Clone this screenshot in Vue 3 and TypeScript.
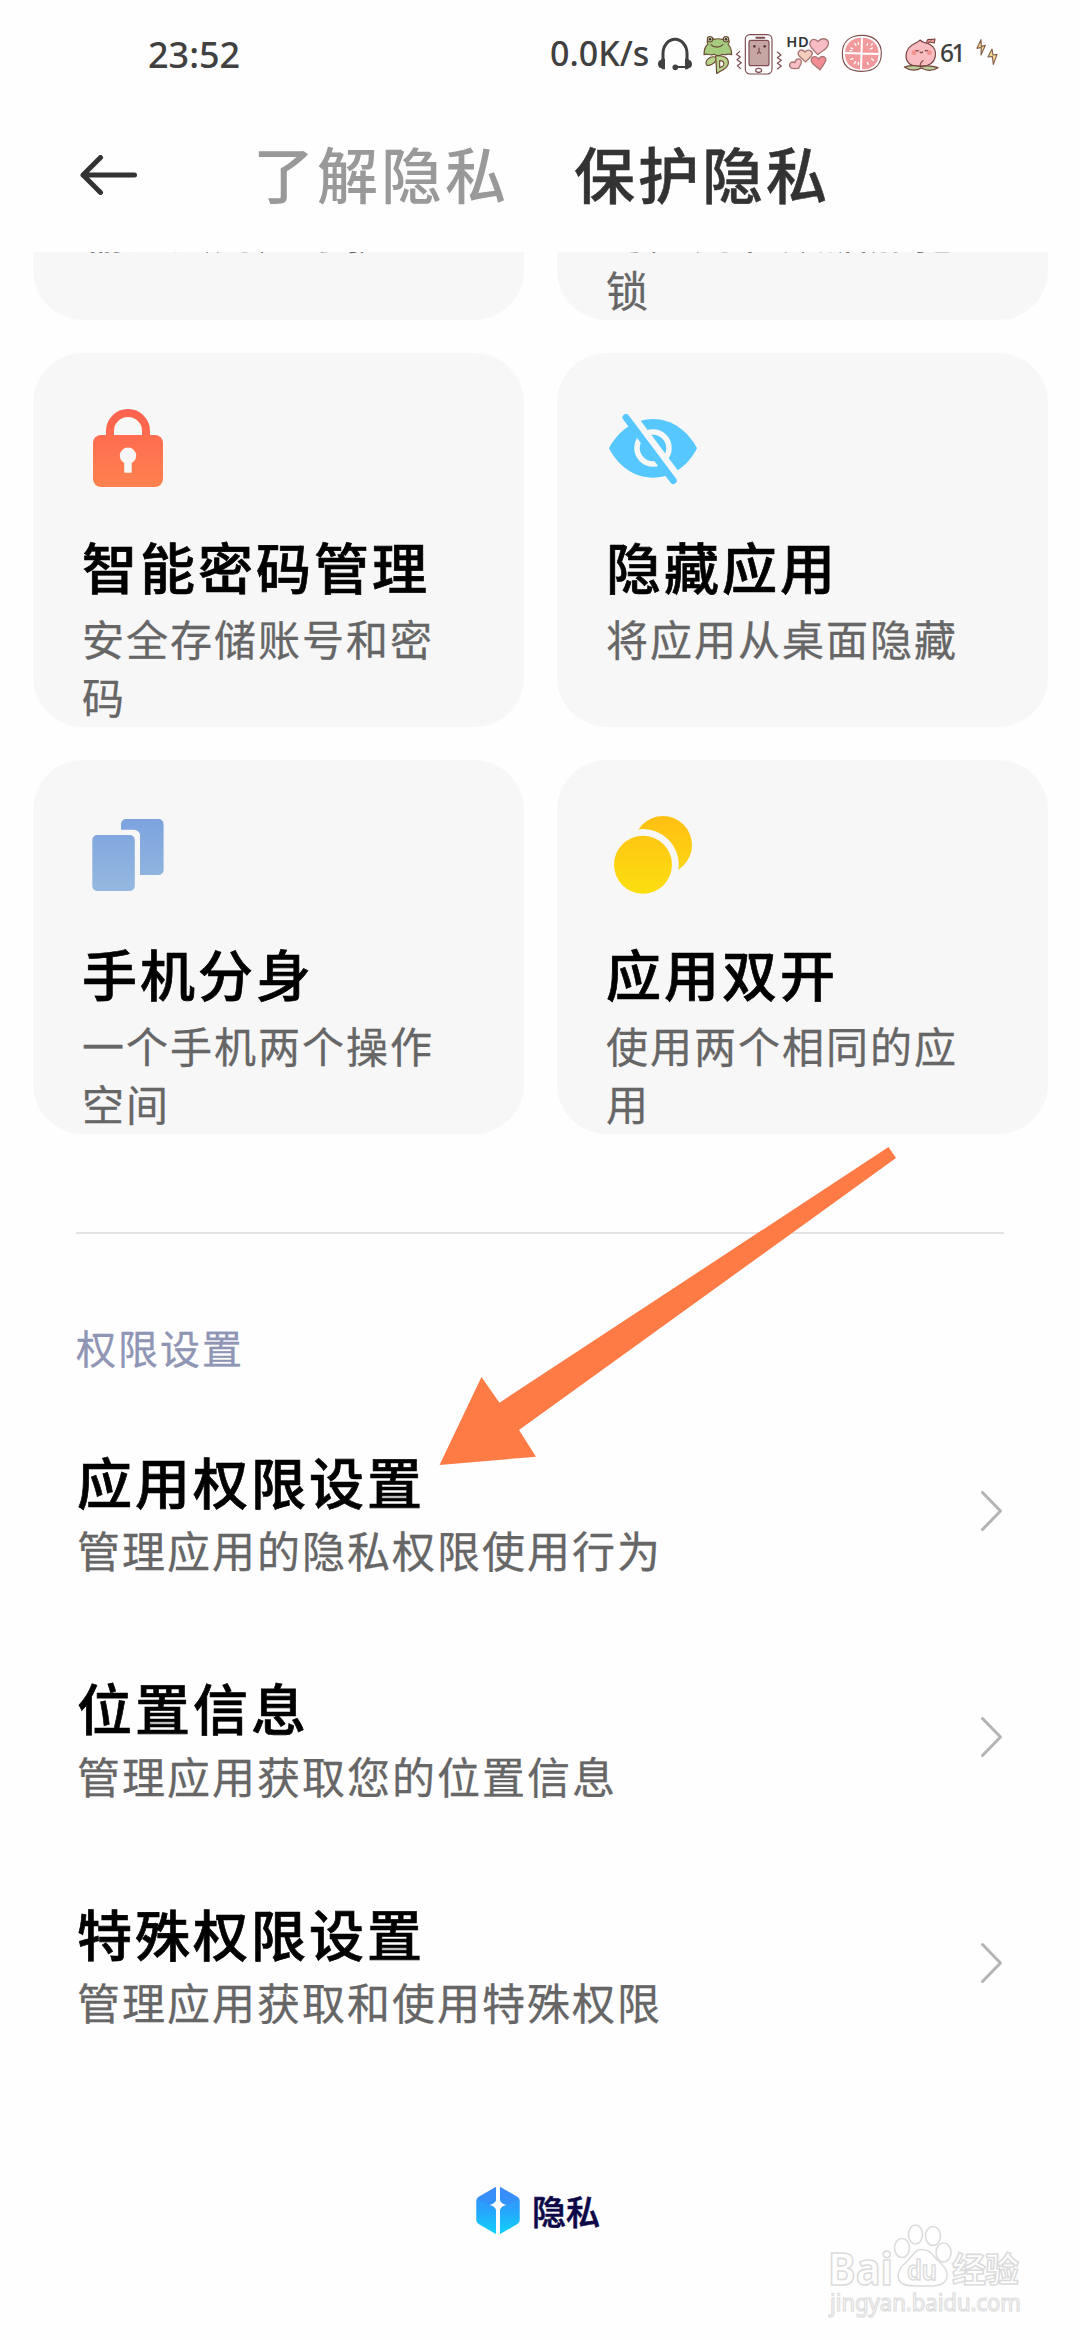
<script setup lang="ts">
interface Card {
  icon?: 'lock' | 'eye' | 'clone' | 'dual'
  title?: string
  desc: string
}

interface Item {
  title: string
  desc: string
}

const cards: Card[] = [
  { desc: '输入法用户守护' },
  { desc: '为应用和数据加把锁' },
  { icon: 'lock', title: '智能密码管理', desc: '安全存储账号和密码' },
  { icon: 'eye', title: '隐藏应用', desc: '将应用从桌面隐藏' },
  { icon: 'clone', title: '手机分身', desc: '一个手机两个操作空间' },
  { icon: 'dual', title: '应用双开', desc: '使用两个相同的应用' },
]

const items: Item[] = [
  { title: '应用权限设置', desc: '管理应用的隐私权限使用行为' },
  { title: '位置信息', desc: '管理应用获取您的位置信息' },
  { title: '特殊权限设置', desc: '管理应用获取和使用特殊权限' },
]
</script>

<template>
  <div class="screen">
    <div class="status">
      <span class="time">23:52</span>
      <span class="speed">0.0K/s</span>
      <svg class="headset" width="36" height="50" viewBox="410 30 108 150">
        <path d="M428 124V100a36 42 0 0 1 72 0v24" fill="none" stroke="#404040" stroke-width="9" />
        <path d="M423 116h11v32h-8l-4-4c-6 0-9-5-9-12s4-12 10-12zM505 116h-11v32h8l4-4c6 0 9-5 9-12s-4-12-10-12z" fill="#404040" />
        <path d="M466 141h36" stroke="#404040" stroke-width="6" />
        <circle cx="465" cy="142" r="8.500" fill="#404040" />
      </svg>
      <svg class="frog" width="31" height="50" viewBox="547 30 93 150">
        <g stroke="#6b4a35" stroke-width="3.500" stroke-linejoin="round" stroke-linecap="round">
          <path d="M590 100L592 160M590 112C570 105 556 122 560 134c8 6 24-2 30-14" fill="#b9d38c" />
          <path d="M588 108c28-4 42 10 37 26-6 14-22 18-34 26z" fill="#b9d38c" />
          <path d="M600 122c12 0 16 8 10 16l-10 5z" fill="#fff" />
          <path d="M553 104c0-18 4-26 12-32a11 11 0 1 1 18-14c9-3 18-2 26 0a11 11 0 1 1 16 15c7 6 11 16 11 31-10-6-18 4-27-1-9 5-18 5-26 0-10 5-20-4-30 1z" fill="#a6cb7e" />
          <circle cx="571" cy="58" r="8" fill="#e8f2d2" />
          <circle cx="619" cy="58" r="8" fill="#e8f2d2" />
          <path d="M574 74c8 10 26 10 36 0" fill="none" />
        </g>
        <circle cx="571" cy="58" r="4" fill="#3b302b" />
        <circle cx="619" cy="58" r="4" fill="#3b302b" />
      </svg>
      <svg class="vibrate" width="48" height="50" viewBox="643 30 144 150">
        <g fill="none" stroke="#7b4b4f" stroke-width="3.500" stroke-linecap="round" stroke-linejoin="round">
          <path d="M657 94l-10 9 12 8-10 8 13 9-12 9 10 9M770 96l11 9-11 8 12 8-12 9 12 8-12 9" />
          <rect x="674" y="44" width="80" height="118" rx="14" fill="#fff" />
          <rect x="685" y="61" width="60" height="76" rx="6" fill="#c5a6a2" />
          <path d="M707 53h24" stroke-width="6" />
          <ellipse cx="714" cy="151" rx="9" ry="6" />
          <path d="M715 84v10M710 101l5-6 5 5" />
        </g>
        <circle cx="701" cy="79" r="4" fill="#61383b" />
        <circle cx="732" cy="79" r="4" fill="#61383b" />
      </svg>
      <svg class="hearts" width="46" height="50" viewBox="40 30 138 150">
        <g stroke="#a87574" stroke-width="4" stroke-linejoin="round">
          <path d="M141 104L123 84c-14-17 5-36 19-19 11-15 34-9 31 8-3 15-20 20-32 31z" fill="#f8bdc4" />
          <path d="M105 126L86 109c-11-13 5-26 17-13 9-11 25-3 21 8-3 10-13 13-19 22z" fill="#f4cdbf" />
          <path d="M84 145c-10 1-20 3-25-3-7-11 4-20 14-14 2-14 19-15 19-2 0 8-6 12-8 19z" fill="#f8bfc4" />
          <path d="M148 150c-5-9-22-12-26-26-3-14 14-19 22-7 8-13 25-7 21 5-3 10-11 17-17 28z" fill="#f18d94" />
        </g>
        <text x="47" y="80" font-size="44" font-weight="600" fill="#353535" textLength="67">HD</text>
      </svg>
      <svg class="citrus" width="42" height="50" viewBox="210 30 126 150">
        <path d="M273 46c36 0 58 21 58 54 0 34-20 54-58 54-36 0-59-16-59-53s23-55 59-55z" fill="#fff" stroke="#80504f" stroke-width="3.500" />
        <path d="M272 53c30 0 51 18 51 48s-18 47-50 47c-31 0-51-16-51-47 0-30 20-48 50-48z" fill="#f2999b" />
        <path d="M273 51l-3 98M220 99l106 3" stroke="#fff" stroke-width="6" />
        <path d="M240 84l5 2M251 71l4 5M290 71l-2 5M304 84l-6 3M239 118l7-2M250 131l4-6M289 127l3 6M302 116l5 5M262 68v5M304 72l-3 3M237 92h5M262 127v7" stroke="#fff" stroke-width="4" stroke-linecap="round" />
      </svg>
      <svg class="peach" width="37" height="50" viewBox="395 30 111 150">
        <g stroke="#75413e" stroke-width="3.500" stroke-linejoin="round">
          <path d="M466 70c0-10 3-14 12-11l13-2-2 12-15-3-3 6" fill="#e99898" />
          <path d="M450 138c-28 5-46-9-46-30 0-23 18-34 29-39 6-3 11-6 13-9 7 8 19 8 31 14 12 7 17 20 15 34-3 20-18 30-42 30z" fill="#f9bcc0" />
          <path d="M399 141c20-6 36-5 50-1 17-4 31-4 51 3-16 10-34 10-50 1-16 9-35 8-51-3z" fill="#b7cf96" />
          <path d="M447 140c-2-8 2-13 8-18M434 91q3 4 7 0M462 91q3 4 7 0M446 96q3 5 8 0" fill="none" stroke-linecap="round" />
        </g>
        <circle cx="428" cy="98" r="7" fill="#f3918d" />
        <circle cx="474" cy="98" r="7" fill="#f3918d" />
      </svg>
      <span class="battery">61</span>
      <svg class="bolts" width="24" height="50" viewBox="610 30 72 150">
        <g fill="#f8dc91" stroke="#86614f" stroke-width="3.500" stroke-linejoin="round">
          <path d="M628 59l-12 26 13-3-1 23 13-29-12 3z" />
          <path d="M661 87l-12 24 13-2 3 24 11-30-12 2z" />
        </g>
      </svg>
    </div>

    <header class="header">
      <svg class="back" width="58" height="40" viewBox="0 0 58 40">
        <path d="M54.500 20H3M20.500 2.500L3 20l17.500 17.500" fill="none" stroke="#333" stroke-width="5" stroke-linecap="round" stroke-linejoin="round" />
      </svg>
      <span class="tab">了解隐私</span>
      <span class="tab active">保护隐私</span>
    </header>

    <main class="content">
      <section class="grid">
        <article v-for="(card, i) in cards" :key="i" class="card">
          <svg class="icon" width="90" height="90" viewBox="0 0 90 90">
            <defs>
              <linearGradient id="lockFill" gradientUnits="userSpaceOnUse" x1="0" y1="6" x2="0" y2="84">
                <stop offset="0" stop-color="#ff614f" /><stop offset="1" stop-color="#ff824f" />
              </linearGradient>
              <linearGradient id="cloneFill" gradientUnits="userSpaceOnUse" x1="0" y1="9" x2="0" y2="81">
                <stop offset="0" stop-color="#7ca3df" /><stop offset="1" stop-color="#95b9e0" />
              </linearGradient>
              <linearGradient id="dualFill" gradientUnits="userSpaceOnUse" x1="0" y1="6" x2="0" y2="84">
                <stop offset="0" stop-color="#ffbf14" /><stop offset="1" stop-color="#fbdf10" />
              </linearGradient>
            </defs>
            <g v-if="card.icon === 'lock'">
              <path d="M27 34V28a18 18 0 0 1 36 0v6" fill="none" stroke="url(#lockFill)" stroke-width="8" />
              <rect x="10" y="32" width="70" height="52" rx="8" fill="url(#lockFill)" />
              <circle cx="45" cy="52.700" r="8.200" fill="#f7f7f7" />
              <rect x="41.200" y="56" width="7.500" height="13.700" rx="1" fill="#f7f7f7" />
            </g>
            <g v-else-if="card.icon === 'eye'" transform="translate(1 0)">
              <path d="M1 45.300C10 28 26 16 45 16s35 12 44 29.300C80 63 64 74.700 45 74.700S10 63 1 45.300z" fill="#56c8ff" />
              <circle cx="45" cy="45" r="16" fill="none" stroke="#f7f7f7" stroke-width="5.500" />
              <path d="M23 10.500L70.500 74" stroke="#f7f7f7" stroke-width="7" />
              <path d="M18 14.500L65.200 77.500" stroke="#56c8ff" stroke-width="7" stroke-linecap="round" />
            </g>
            <g v-else-if="card.icon === 'clone'" fill="url(#cloneFill)">
              <rect x="9.300" y="25" width="42.500" height="56" rx="5" />
              <path d="M38 19.700V14a5 5 0 0 1 5-5h32.600a5 5 0 0 1 5 5v46a5 5 0 0 1-5 5H57V26a6 6 0 0 0-6-6.300z" />
            </g>
            <g v-else-if="card.icon === 'dual'" transform="translate(1 0)">
              <circle cx="55" cy="35" r="29" fill="url(#dualFill)" />
              <circle cx="35" cy="54.700" r="35.800" fill="#f7f7f7" />
              <circle cx="35" cy="54.700" r="29" fill="url(#dualFill)" />
            </g>
          </svg>
          <h2 class="title">{{ card.title }}</h2>
          <p class="desc">{{ card.desc }}</p>
        </article>
      </section>

      <hr class="divider" />
      <h3 class="label">权限设置</h3>

      <section class="list">
        <div v-for="item in items" :key="item.title" class="item">
          <div class="item-text">
            <h2 class="title">{{ item.title }}</h2>
            <p class="desc wide">{{ item.desc }}</p>
          </div>
          <svg width="24" height="42" viewBox="0 0 24 42">
            <path d="M2.500 2.500L20.500 21 2.500 39.500" fill="none" stroke="#b4b4b4" stroke-width="3" stroke-linecap="round" stroke-linejoin="round" />
          </svg>
        </div>
      </section>
    </main>

    <footer class="brand">
      <svg width="44" height="47" viewBox="0 0 132 141">
        <defs>
          <linearGradient id="brandFill" x1="0" y1="0" x2="0" y2="1">
            <stop offset="0" stop-color="#3d8af8" /><stop offset="0.450" stop-color="#2f96fb" /><stop offset="1" stop-color="#08ddfa" />
          </linearGradient>
        </defs>
        <path d="M60 0V40Q58 50 40 54Q58 58 60 70V141L8 111Q1 107 1 99V41Q1 33 8 29L50 5Q56 1 60 0z" fill="url(#brandFill)" />
        <path d="M72 0V40Q74 50 92 54Q74 58 72 70V141L124 111Q131 107 131 99V41Q131 33 124 29L82 5Q76 1 72 0z" fill="url(#brandFill)" />
        <path d="M1 38L40 54Q58 58 60 70V141L8 111Q1 107 1 99zM131 38L92 54Q74 58 72 70V141L124 111Q131 107 131 99z" fill="#1db8ff" opacity="0.300" />
      </svg>
      <span class="brand-name">隐私</span>
    </footer>

    <svg class="pointer" width="460" height="322" viewBox="438 1146 460 322">
      <path d="M439.500 1465L481.500 1377 499.500 1402.700 888.500 1147 896 1158 519 1430 536 1456.700z" fill="#ff7b45" />
    </svg>

    <svg class="watermark" width="210" height="110" viewBox="0 0 210 110">
      <g fill="#fff" stroke="#dcdcdc" stroke-width="1.600">
        <text x="6" y="64.500" font-size="45" font-weight="700" textLength="65" lengthAdjust="spacingAndGlyphs">Bai</text>
        <ellipse cx="80" cy="28" rx="7.500" ry="9.500" />
        <ellipse cx="93.500" cy="14.500" rx="7" ry="9.500" />
        <ellipse cx="111" cy="16" rx="7.500" ry="9.500" />
        <ellipse cx="121.500" cy="32.500" rx="7.500" ry="9.500" />
        <path d="M100 29.500c9 0 12 8 17 12 5 5 9 9 8 15-1 8-8 10-25 9.500-15 .5-23-1-24-9.500 0-7 4-11 9-15 5-5 7-12 15-12z" />
        <text x="85" y="60" font-size="27" font-weight="600" textLength="30" lengthAdjust="spacingAndGlyphs">du</text>
        <text class="cjk" x="130" y="62" font-size="34" font-weight="700" textLength="67">经验</text>
        <text x="8" y="91" font-size="24" textLength="191" lengthAdjust="spacingAndGlyphs" stroke-width="1.200">jingyan.baidu.com</text>
      </g>
    </svg>
  </div>
</template>

<style>
body {
  margin: 0;
  background: #fff;
}
</style>

<style scoped>
.screen {
  position: relative;
  width: 1080px;
  height: 2340px;
  overflow: hidden;
  background: #fefefe;
  font-family: "Noto Sans CJK SC", sans-serif;
  display: flex;
  flex-direction: column;
}
h2, h3, p, hr {
  margin: 0;
}
svg {
  display: block;
  flex: none;
}
.status {
  height: 80px;
  padding: 30px 79px 0 148px;
  box-sizing: border-box;
  display: flex;
  align-items: flex-start;
  font-family: "Noto Sans", sans-serif;
  font-weight: 500;
  color: #404040;
  white-space: nowrap;
}
.time {
  width: 402px;
  flex: none;
  font-size: 36px;
  line-height: 49px;
}
.speed {
  width: 107px;
  flex: none;
  font-size: 34px;
  line-height: 47px;
}
.frog { margin-left: 9px; }
.vibrate { margin-left: 2px; }
.hearts { margin-left: 1px; }
.citrus { margin-left: 11px; }
.peach { margin-left: 20px; }
.battery {
  width: 35px;
  flex: none;
  font-size: 24.500px;
  line-height: 46px;
  letter-spacing: -2.500px;
}
.header {
  height: 172px;
  padding-left: 80px;
  display: flex;
  align-items: flex-start;
}
.back {
  margin-top: 75px;
}
.tab {
  margin: 48px 0 0 115px;
  width: 256px;
  font-size: 61px;
  line-height: 90px;
  letter-spacing: 3px;
  font-weight: 500;
  color: #999;
}
.tab.active {
  margin-left: 65px;
  color: #333;
  -webkit-text-stroke: 0.5px #333;
}
.content {
  overflow: hidden;
  height: 1824px;
}
.grid {
  margin: -306px 33px 0;
  display: grid;
  grid-template-columns: 491px 491px;
  grid-auto-rows: 374px;
  gap: 33px;
}
.card {
  box-sizing: border-box;
  padding: 50px 70px 0 50px;
  border-radius: 50px;
  background: #f7f7f7;
  overflow: hidden;
}
.icon {
  margin-bottom: 35px;
}
.title {
  height: 75px;
  margin-left: -1px;
  font-size: 55px;
  line-height: 74px;
  letter-spacing: 3px;
  font-weight: 500;
  color: #000;
  -webkit-text-stroke: 0.7px #000;
  white-space: nowrap;
}
.desc {
  margin-left: -1px;
  font-size: 42px;
  line-height: 58px;
  letter-spacing: 2px;
  color: #666;
  -webkit-text-stroke: 0.3px #666;
}
.card .desc {
  margin-top: 6px;
}
.desc.wide {
  font-size: 43px;
  line-height: 62px;
}
.divider {
  margin: 98px 76px 0;
  border: 0;
  height: 2px;
  background: #e4e4e4;
}
.label {
  margin: 84px 0 22px 76px;
  font-size: 40px;
  line-height: 58px;
  letter-spacing: 2px;
  font-weight: 400;
  color: #8e95b5;
  -webkit-text-stroke: 0.3px #8e95b5;
}
.item {
  height: 226px;
  padding: 0 76px 0 78px;
  display: flex;
  align-items: center;
  justify-content: space-between;
}
.brand {
  margin-top: 111px;
  padding-left: 476px;
  display: flex;
  align-items: center;
  gap: 12px;
}
.brand-name {
  font-size: 34px;
  line-height: 46px;
  font-weight: 500;
  color: #0c0848;
  -webkit-text-stroke: 0.6px #0c0848;
}
.pointer {
  position: absolute;
  left: 438px;
  top: 1146px;
}
.watermark {
  position: absolute;
  left: 822px;
  top: 2220px;
  font-family: "Noto Sans", sans-serif;
}
.cjk {
  font-family: "Noto Sans CJK SC", sans-serif;
}
</style>
